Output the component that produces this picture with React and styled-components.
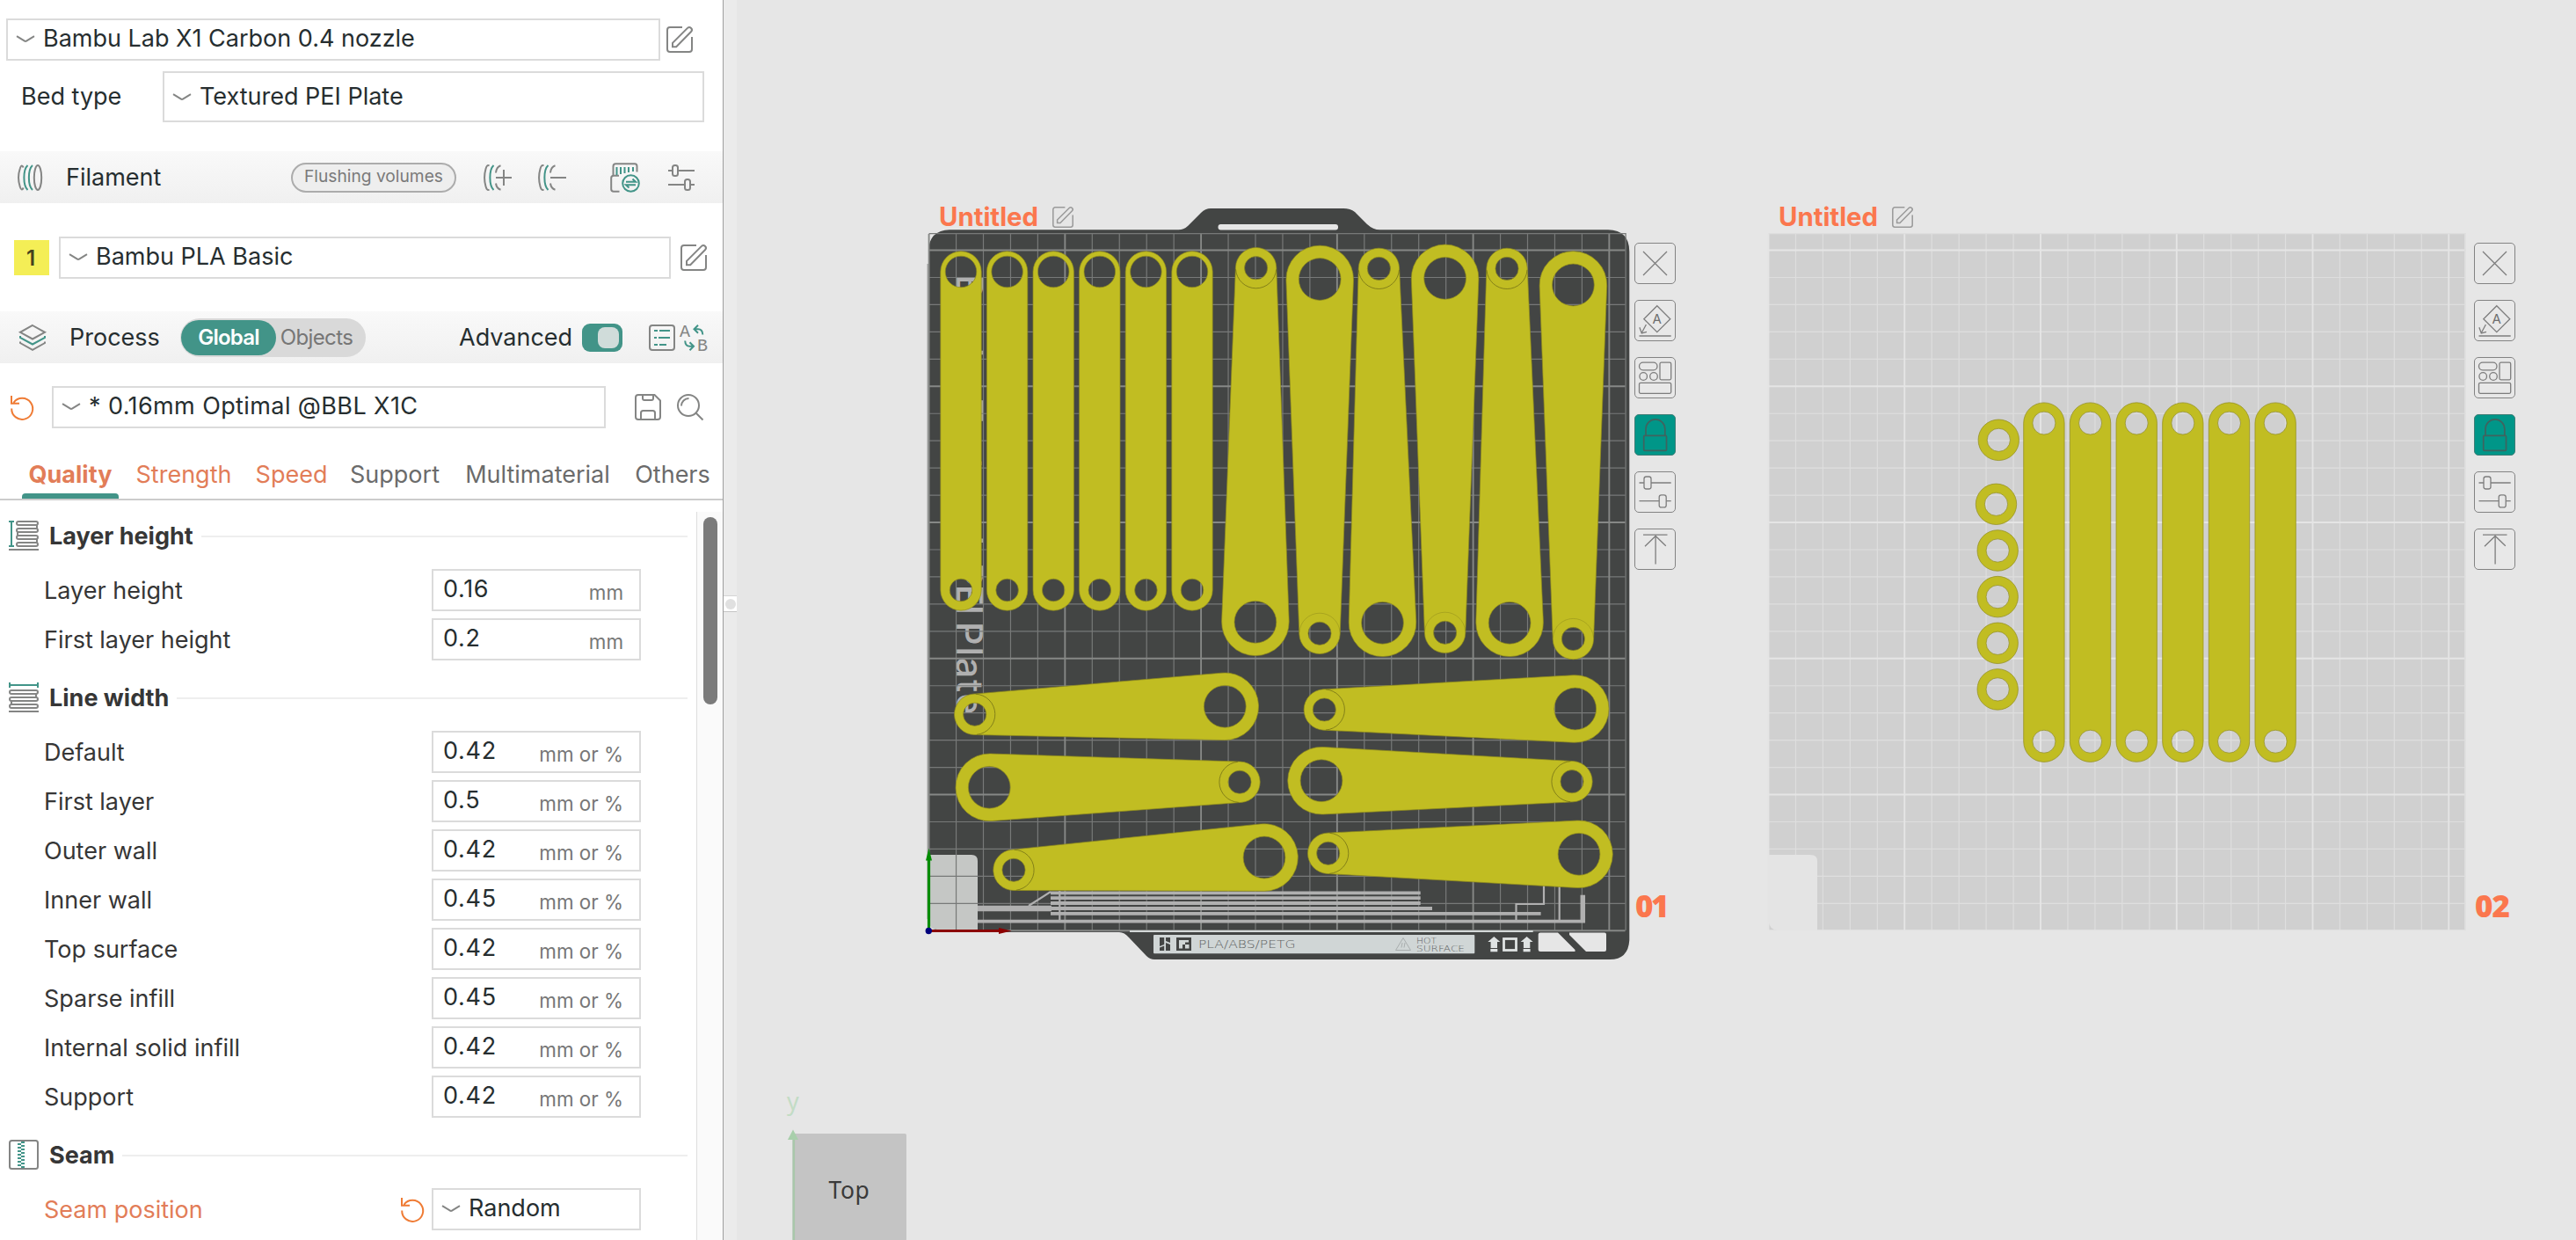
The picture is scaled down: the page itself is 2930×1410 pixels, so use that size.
import React from "react";
import styled, { createGlobalStyle } from "styled-components";

const GREEN = "#429488";
const GREY = "#848584";
const FONT = 'Inter, "Noto Sans", sans-serif';

const GlobalStyle = createGlobalStyle`
  * { box-sizing: border-box; }
  html, body { margin: 0; padding: 0; }
  body { background: #e6e6e6; font-family: ${FONT}; overflow: hidden; }
  button { font: inherit; padding: 0; }
  svg { display: block; flex: none; }
`;

/* ---------- window ---------- */

const Window = styled.div`
  display: flex;
  width: 2930px;
  height: 1410px;
  overflow: hidden;
`;

const Sidebar = styled.aside`
  display: flex;
  flex-direction: column;
  width: 823px;
  flex: none;
  background: #fff;
  border-right: 1px solid #9e9e9e;
`;

const Sash = styled.div`
  display: flex;
  align-items: flex-start;
  width: 15px;
  flex: none;
  padding-top: 677px;
  background: #ebebeb;
`;

const SashGrip = styled.div`
  display: flex;
  align-items: center;
  justify-content: center;
  width: 15px;
  height: 19px;
  background: #fff;
  border-top: 1px solid #d4d4d4;
  border-bottom: 1px solid #c4c4c4;
  &::after {
    content: "";
    width: 12px;
    height: 12px;
    border-radius: 50%;
    background: #e0e0e0;
  }
`;

const Text = styled.span`
  display: block;
  white-space: nowrap;
  font-size: ${(p) => p.$size || 27}px;
  font-weight: ${(p) => p.$weight || 400};
  line-height: 36px;
  letter-spacing: ${(p) => p.$track || 0}px;
  color: ${(p) => p.$color || "#262e30"};
`;

/* ---------- sidebar rows ---------- */

const Row = styled.div`
  display: flex;
  align-items: center;
  flex: none;
  height: ${(p) => p.$h || 48}px;
  margin-top: ${(p) => p.$top || 0}px;
  padding-left: ${(p) => p.$left || 0}px;
`;

const RowLabel = styled(Text)`
  width: 161px;
`;

const SelectBox = styled.div`
  display: flex;
  align-items: center;
  flex: none;
  gap: 9px;
  width: ${(p) => p.$w}px;
  height: ${(p) => p.$h || 48}px;
  padding: 0 10px ${(p) => (p.$h ? 0 : 2)}px 9px;
  background: #fff;
  border: 2px solid #dbdbdb;
`;

const IconSlot = styled.span`
  display: flex;
  flex: none;
  margin-left: ${(p) => p.$left || 0}px;
`;

const SectionBar = styled.header`
  display: flex;
  align-items: center;
  flex: none;
  height: 59px;
  margin-top: ${(p) => p.$top}px;
  padding: 0 ${(p) => p.$right}px 0 ${(p) => p.$left}px;
  background: linear-gradient(#f9f9f9, #f0f0f0);
`;

const SectionName = styled(Text)`
  padding-top: 1px;
  margin-left: ${(p) => p.$left}px;
  width: ${(p) => (p.$w ? `${p.$w}px` : "auto")};
`;

const FlushButton = styled.button`
  display: flex;
  align-items: center;
  justify-content: center;
  flex: none;
  width: 188px;
  height: 34px;
  padding-bottom: 3px;
  margin-left: auto;
  border: 2px solid #acacac;
  border-radius: 17px;
  background: #eee;
`;

const ColorChip = styled.div`
  display: flex;
  align-items: center;
  justify-content: center;
  flex: none;
  width: 40px;
  height: 40px;
  padding: 1px 2px 0 0;
  margin-right: 11px;
  background: #f4ee56;
`;

const Segmented = styled.div`
  display: flex;
  flex: none;
  width: 211px;
  height: 44px;
  padding: 2px 1px;
  border-radius: 22px;
  background: #d9d9d9;
`;

const Segment = styled.button`
  display: flex;
  align-items: center;
  justify-content: center;
  width: ${(p) => p.$w}px;
  height: 40px;
  border: 0;
  border-radius: 20px;
  background: ${(p) => (p.$on ? GREEN : "transparent")};
`;

const Switch = styled.div`
  display: flex;
  align-items: center;
  justify-content: flex-end;
  flex: none;
  width: 46px;
  height: 32px;
  padding-right: 4px;
  margin-left: auto;
  border-radius: 9px;
  background: ${GREEN};
  &::after {
    content: "";
    width: 24px;
    height: 24px;
    border-radius: 8px;
    background: #d0dcda;
  }
`;

const TabBar = styled.nav`
  display: flex;
  flex: none;
  height: 82px;
  padding-left: 25px;
  border-bottom: 2px solid #ccc;
`;

const Tab = styled.div`
  display: flex;
  flex-direction: column;
  align-items: center;
  justify-content: flex-end;
  flex: none;
  width: ${(p) => p.$w}px;
  &::after {
    content: "";
    width: 100%;
    height: 6px;
    margin-top: 3px;
    border-radius: 4px 4px 0 0;
    background: ${(p) => (p.$on ? GREEN : "transparent")};
  }
`;

const Scroller = styled.div`
  display: flex;
  flex: 1;
  min-height: 0;
  overflow: hidden;
`;

const Settings = styled.div`
  flex: 1;
  padding-left: 10px;
`;

const Group = styled.section`
  display: flex;
  flex-direction: column;
  gap: 8px;
  padding-top: ${(p) => p.$top}px;
`;

const GroupTitle = styled.div`
  display: flex;
  align-items: center;
  gap: 12px;
  height: 34px;
  margin-bottom: 13px;
  &::after {
    content: "";
    flex: 1;
    height: 2px;
    margin: 2px 10px 0 -3px;
    background: #eeeeee;
  }
`;

const GroupName = styled(Text)`
  padding-top: 2px;
`;

const Setting = styled.div`
  display: flex;
  align-items: center;
  height: 48px;
  padding: 0 63px 0 40px;
`;

const SettingLabel = styled(Text)`
  flex: 1;
  padding-top: 2px;
`;

const Field = styled.div`
  display: flex;
  justify-content: space-between;
  width: 238px;
  height: 48px;
  padding: 3px 18px 0 11px;
  background: #fff;
  border: 2px solid #dbdbdb;
`;

const Unit = styled(Text)`
  padding-top: 4px;
`;

const Track = styled.div`
  width: 30px;
  margin-top: 13px;
  padding: 6px 0 0 7px;
  border-left: 1px solid #dedede;
  background: #fafafa;
`;

const Thumb = styled.div`
  width: 16px;
  height: 213px;
  border-radius: 8px;
  background: #7b7b7b;
`;

/* ---------- viewport ---------- */

const Viewport = styled.main`
  position: relative;
  flex: 1;
  display: flex;
  align-items: flex-start;
  gap: 104px;
  padding: 228px 0 0 218px;
  background: #e6e6e6;
`;

const PlateBox = styled.section`
  display: flex;
  flex-direction: column;
  width: 851px;
  flex: none;
`;

const PlateTitle = styled.div`
  display: flex;
  align-items: center;
  gap: 16px;
  height: 38px;
  padding-left: 12px;
`;

const PlateBody = styled.div`
  display: flex;
  gap: 10px;
`;

const Tools = styled.div`
  display: flex;
  flex-direction: column;
  gap: 18px;
  padding-top: 10px;
`;

const Tool = styled.button`
  display: flex;
  width: 47px;
  height: 47px;
  border: 1.5px solid ${(p) => (p.$on ? "#3e7d76" : "#838383")};
  border-radius: 5px;
  background: ${(p) => (p.$on ? "#009688" : "#e8e8e8")};
  svg { margin: -1px; }
`;

const PlateNumber = styled.div`
  margin-top: auto;
  padding: 0 0 3px 1px;
  font-family: "Noto Sans", sans-serif;
  font-size: 35px;
  font-weight: 900;
  line-height: 50px;
  letter-spacing: ${(p) => p.$track}px;
  color: #fb774e;
`;

const ViewCube = styled.div`
  position: absolute;
  left: 55px;
  bottom: 0;
`;

/* ---------- icons ---------- */

const Icon = ({ w = 30, h = 30, size, sw = 2, color = GREY, children }) => (
  <svg
    width={size || w}
    height={size ? (size * h) / w : h}
    viewBox={`0 0 ${w} ${h}`}
    fill="none"
    stroke={color}
    strokeWidth={sw}
    overflow="visible"
  >
    {children}
  </svg>
);

const Chevron = () => (
  <Icon w={22} h={9} sw={2}>
    <path d="M1 1.2 10 6.6q1 .6 2 0L21 1.2" />
  </Icon>
);

const EditIcon = ({ size = 30, sw = 2, color }) => (
  <Icon size={size} sw={sw} color={color}>
    <path d="M18 1H4A3 3 0 0 0 1 4V26A3 3 0 0 0 4 29H26A3 3 0 0 0 29 26V12" />
    <path d="M7 23.2V18.8L24 1.9A2.9 2.9 0 0 1 28.1 6L11.2 23.2Z" />
  </Icon>
);

const SpoolIcon = () => (
  <Icon w={28} h={30}>
    <path d="M6.6 3.5C5.5.8 4 .6 2.8 4.5.6 11 .6 19 2.8 25.5 4 29.4 5.5 29.2 6.6 26.5" />
    <path stroke={GREEN} d="M11.5 1C6 6 6 24 11.5 29M17 1C11.500 6 11.500 24 17 29" />
    <ellipse cx="23" cy="15" rx="4.200" ry="14" />
  </Icon>
);

const SpoolEdit = ({ plus }) => (
  <Icon w={32} h={30}>
    <path d="M6.500 1.500C4.500.2 3.300 2 2.500 5 .5 12 .5 18 2.500 25c.8 3 2 4.800 4 3.500" />
    <path stroke={GREEN} d="M11.500 1C6 6 6 24 11.500 29" />
    <path d="M19.500 1.300C17 2 14.500 5 14 9.500M19.500 28.700C17 28 14.500 25 14 21.500" />
    <path d={plus ? "M14 15H32M23 6V24" : "M14 15H32"} />
  </Icon>
);

const CardIcon = () => (
  <Icon w={34} h={34}>
    <path d="M3.500 15V4Q3.500 1.200 6.300 1.200H28Q30.500 1.200 30.500 4V10.500" />
    <path d="M10 14.800H4Q1.200 14.800 1.200 17.500V30Q1.200 32.800 4 32.800H10.500" />
    <path stroke={GREEN} d="M7.500 5V14M12 5V13M16.500 5V12M21 5V11M26 5V10" />
    <circle stroke={GREEN} cx="23.500" cy="23.500" r="9.300" />
    <path stroke={GREEN} d="M18 21.700H29L25.500 18.500M29 25.300H18L21.500 28.500" />
  </Icon>
);

const SlidersIcon = () => (
  <Icon>
    <path d="M0 7H5M11 7H30M0 23H19M25 23H30" />
    <rect x="5" y="1" width="6" height="12" rx="2.500" />
    <rect x="19" y="17" width="6" height="12" rx="2.500" />
  </Icon>
);

const LayersIcon = () => (
  <Icon>
    <path d="M15 1 29 8.800 15 16.500 1 8.800Z" />
    <path stroke={GREEN} d="M1 13V15L15 22.500 29 15V13" />
    <path d="M1 19.500V21L15 28.800 29 21V19.500" />
  </Icon>
);

const ListIcon = () => (
  <Icon>
    <rect x="1" y="1" width="28" height="28" rx="3" />
    <path stroke={GREEN} d="M6 7H10M12 7H24M6 15H9M11 15H24M6 23H10M12 23H20" />
  </Icon>
);

const CompareIcon = () => (
  <Icon>
    <g fill={GREY} stroke="none" fontFamily='"Liberation Mono", monospace' fontSize="20">
      <text x="-1" y="14">A</text>
      <text x="19" y="29.500">B</text>
    </g>
    <path stroke={GREEN} d="M20 .8 15.500 5.300 20 9.800M15.500 5.300H20Q25 5.300 25.300 11.500" />
    <path stroke={GREEN} d="M10.500 29.200 15 24.700 10.500 20.200M15 24.700H10.500Q5.500 24.700 5.200 18.500" />
  </Icon>
);

const UndoIcon = () => (
  <Icon w={26} h={26} color="#ef7b34">
    <path d="M1 0V8.700H10M3.500 7.800A12 12 0 1 1 1.200 14.500" />
  </Icon>
);

const SaveIcon = () => (
  <Icon>
    <path d="M4 1H22.500L29 7.500V26A3 3 0 0 1 26 29H4A3 3 0 0 1 1 26V4A3 3 0 0 1 4 1Z" />
    <path d="M9 1V5Q9 7 11 7H19Q21 7 21 5V1M7 29V21.500Q7 19 9.500 19H20.500Q23 19 23 21.500V29" />
  </Icon>
);

const SearchIcon = () => (
  <Icon>
    <circle cx="13" cy="13" r="12" />
    <path d="M21.700 21.700 29.500 29.500M5 13.500A8.500 8.500 0 0 1 13.500 5" />
  </Icon>
);

const LayerHeightIcon = () => (
  <Icon w={34} h={34}>
    <path stroke={GREEN} d="M3 1V29M0 1H6M0 29H6" />
    {[1, 9, 17, 25].map((y) => (
      <rect key={y} x="9" y={y} width="24" height="4" rx="2" />
    ))}
    <path d="M0 33H34M32 5V9M10 13V17M32 21V25" />
  </Icon>
);

const LineWidthIcon = () => (
  <Icon w={34} h={34}>
    <path stroke={GREEN} d="M1 3H33M1 0V6M33 0V6" />
    {[9, 17, 25].map((y) => (
      <rect key={y} x="1" y={y} width="32" height="4" rx="2" />
    ))}
    <path d="M0 33H34M31 13V17M3 21V25" />
  </Icon>
);

const SeamIcon = () => (
  <Icon w={34} h={34}>
    <rect x="1" y="1" width="32" height="32" rx="2.500" />
    <g stroke={GREEN} strokeWidth="4" strokeDasharray="2 2">
      <path d="M16 2V32" />
      <path d="M12 4V32" />
    </g>
  </Icon>
);

const TOOL_ICONS = [
  <path d="M10 10 37 37M37 10 10 37" />,
  <>
    <path d="M25.800 6.700 40.800 21.700 25.800 36.700 10.800 21.700ZM5.500 41H41.700M13.400 28 8.300 37.500M5.900 31.300 8.300 37.900 14 36.300" />
    <text x="25.800" y="26.800" textAnchor="middle" fontSize="15" fill="#6e6e6e" stroke="none">
      A
    </text>
  </>,
  <>
    <rect x="5.500" y="6.200" width="20.500" height="8.600" rx="4.300" />
    <rect x="29" y="6.200" width="12.700" height="19.600" rx="1.500" />
    <circle cx="10.200" cy="22" r="4.300" />
    <circle cx="22" cy="22" r="4.300" />
    <rect x="5.500" y="29.300" width="36.200" height="12" rx="1.500" />
  </>,
  <>
    <path d="M13 24.400V16.800A10.900 10.900 0 0 1 34.800 16.800V24.400" />
    <rect x="10.700" y="24.400" width="25.800" height="16.900" rx="1" />
  </>,
  <>
    <path d="M5.500 13H11M19 13H41.700M5.500 33.700H28.200M36.200 33.700H41.700" />
    <rect x="11" y="6" width="8" height="14" rx="2.500" />
    <rect x="28.200" y="26.900" width="8" height="14" rx="2.500" />
  </>,
  <path d="M10 7.200H37.500M24.100 8V40.600M12 20.300 24.100 8.500 35.800 19.800" />,
];

/* ---------- plate drawing ---------- */

const YELLOW = "#c1bd22";
const EDGE = "#8f8b1c";
const PITCH = 30.95;

const disc = (x, y, r) => `M${x - r} ${y}a${r} ${r} 0 1 0 ${2 * r} 0a${r} ${r} 0 1 0 ${-2 * r} 0Z`;

/* Outline of the belt round two discs, with a hole in each. */
function armPath(x1, y1, r1, h1, x2, y2, r2, h2) {
  const a = Math.atan2(y2 - y1, x2 - x1);
  const t = Math.acos((r1 - r2) / Math.hypot(x2 - x1, y2 - y1));
  const p = (x, y, r, k) => `${x + r * Math.cos(a + k * t)} ${y + r * Math.sin(a + k * t)}`;
  return (
    `M${p(x1, y1, r1, 1)}A${r1} ${r1} 0 ${r1 >= r2 ? 1 : 0} 1 ${p(x1, y1, r1, -1)}` +
    `L${p(x2, y2, r2, -1)}A${r2} ${r2} 0 ${r2 > r1 ? 1 : 0} 1 ${p(x2, y2, r2, 1)}Z` +
    disc(x1, y1, h1) +
    disc(x2, y2, h2)
  );
}

const Part = ({ d }) => <path d={d} fill={YELLOW} fillRule="evenodd" stroke={EDGE} strokeWidth="0.7" />;

/* A crank: big eye at b, small eye with a raised boss at s. */
const Crank = ({ b, s, faint }) => {
  const a = Math.atan2(b[1] - s[1], b[0] - s[0]);
  const r = 23.1;
  const pt = (k) => `${s[0] + r * Math.cos(a + k)} ${s[1] + r * Math.sin(a + k)}`;
  return (
    <g>
      <Part d={armPath(b[0], b[1], 38.3, 23.9, s[0], s[1], 23.2, 13.1)} />
      <path d={`M${pt(-1.5)}A${r} ${r} 0 0 1 ${pt(1.5)}`} fill="none" stroke="#6f6c16" strokeWidth="1" opacity={faint ? 0.3 : 0.75} />
    </g>
  );
};

const CRANKS = [
  { s: [1428.6, 304.7], b: [1427.9, 707.3] },
  { b: [1501.2, 317.5], s: [1501, 720.3], faint: true },
  { s: [1568.4, 305.4], b: [1572.5, 708.3] },
  { b: [1643.6, 316.4], s: [1643.6, 719.3], faint: true },
  { s: [1714, 305.4], b: [1717.1, 708.3] },
  { b: [1789.4, 324], s: [1789.4, 726.5], faint: true },
  { s: [1108.7, 812.3], b: [1393.3, 803.3] },
  { b: [1125.3, 895.3], s: [1410, 889.3] },
  { s: [1153, 989.3], b: [1438, 975] },
  { s: [1506.3, 807], b: [1791.7, 806] },
  { b: [1503, 887.7], s: [1788, 888.7] },
  { s: [1510.7, 970.3], b: [1796, 971.3] },
];

function Grid({ x, thin, bold }) {
  const lines = Array.from({ length: 26 }, (_, i) => i);
  const d = (keep) =>
    lines
      .filter(keep)
      .map((i) => `M${x + i * PITCH} 266V1058M${x} ${1058.3 - i * PITCH}H${x + 792}`)
      .join("");
  return (
    <g fill="none">
      <path d={d((i) => i % 5)} stroke={thin} strokeWidth="1.2" />
      <path d={d((i) => i % 5 === 0)} stroke={bold} strokeWidth="1.9" />
      <path d={`M${x} 265.700H${x + 792.5}V1058`} stroke={thin} strokeWidth="1.3" />
    </g>
  );
}

const Scene = ({ x, children }) => (
  <svg width="793" height="792" viewBox={`${x} 266 793 792`} overflow="visible">
    {children}
  </svg>
);

function TexturedPlate() {
  const silver = "#b0b0b0";
  return (
    <Scene x={1056}>
      <path d="M1055.500 300V1045" stroke="#a2a3a2" strokeWidth="2" />
      <path
        fill="#434544"
        d="M1056 285Q1057 262 1080 261.300H1340Q1346 261.500 1351 257L1366 242Q1371 237 1377 237H1528Q1536 237 1541 241L1555 255Q1562 261.500 1570 261.300H1829Q1853.300 262 1853.300 286V1069Q1852 1091 1831 1091H1313Q1308 1091 1304 1087L1284 1066Q1279 1060 1273 1060H1075Q1056 1059 1056 1040Z"
      />
      <rect x="1385.500" y="255" width="136.500" height="6.500" rx="3" fill="#e6e6e6" />
      <g fill={silver} fontSize="41.500" fontWeight="500">
        <text transform="translate(1088 312) rotate(90)" textLength="308">Bambu Textured</text>
        <text transform="translate(1088 640) rotate(90)" textLength="59">PEI</text>
        <text transform="translate(1088 707) rotate(90)" textLength="106">Plate</text>
      </g>
      <path fill="#c5c7c5" d="M1057 972H1105Q1112 972 1112 979V1057H1066Q1057 1057 1057 1048Z" />
      <Grid x={1056.6} thin="#777978" bold="#868886" />
      <g fill="none" stroke={silver} strokeWidth="3.800">
        <path d="M1195 1015.300H1615.700M1195 1021.200H1615.700M1195 1027H1615.700M1195 1033H1629M1195 1038.800H1752.600M1112 1047.700H1803" />
        <path strokeWidth="6.500" d="M1112 1033H1196" />
        <path strokeWidth="2.200" d="M1205.300 1013V1047M1170 1030 1195 1014M1756 1006V1028H1724.500V1047M1773.700 1007V1047" />
        <path strokeWidth="5.500" d="M1800.300 1017.700V1049" />
      </g>
      <path d="M1285 1059H1743.700" stroke="#d3d8d8" strokeWidth="2" />
      <rect x="1312" y="1063" width="365.300" height="21.300" rx="1" fill="#d0d6d6" />
      <g fill="#434544">
        <path d="M1319 1066H1324.200V1074L1319 1076ZM1319 1077.500 1324.200 1075.500V1081H1319ZM1326 1066H1331V1072L1326 1070ZM1326 1072 1331 1074V1081H1326Z" />
        <path fillRule="evenodd" d="M1338 1066H1355V1081H1338ZM1341 1069V1078.500H1345V1074H1348V1071.500H1352V1069ZM1348 1074V1078.500H1352.500V1074Z" />
      </g>
      <g fill="#5d6161" fontFamily='"DejaVu Sans", sans-serif' fontWeight="200">
        <text x="1363" y="1078" fontSize="12.500" textLength="110.500" lengthAdjust="spacingAndGlyphs">PLA/ABS/PETG</text>
        <text x="1611" y="1073.300" fontSize="9" textLength="23" lengthAdjust="spacingAndGlyphs">HOT</text>
        <text x="1611" y="1081.500" fontSize="9" textLength="55" lengthAdjust="spacingAndGlyphs">SURFACE</text>
      </g>
      <path fill="none" stroke="#a9aeae" d="M1596 1066.500 1604.500 1080.500H1587.500ZM1594 1077.500 1595 1072M1597 1077.500 1598 1072" />
      <g fill="#dfe3e3">
        {[1692.3, 1729.6].map((x) => (
          <path key={x} d={`M${x + 7} 1065l7 6h-3.300v7h-7.400v-7H${x}ZM${x + 3} 1079h8v3.200h-8Z`} />
        ))}
      </g>
      <rect x="1710.500" y="1067.500" width="14" height="13" fill="none" stroke="#dfe3e3" strokeWidth="2.800" />
      <path fill="#e6e6e6" d="M1752 1060.500H1772L1791.500 1080V1082H1752Q1749.700 1082 1749.700 1080V1062.500Q1749.700 1060.500 1752 1060.500ZM1785 1060.500H1825Q1827 1060.500 1827 1062.500V1080Q1827 1082 1825 1082H1804L1785 1063Z" />
      {[0, 1, 2, 3, 4, 5].map((i) => (
        <Part key={i} d={armPath(1093 + i * 52.6, 309, 23.2, 17.8, 1093 + i * 52.6, 671, 23.2, 12.8)} />
      ))}
      {CRANKS.map((c, i) => (
        <Crank key={i} {...c} />
      ))}
      <path d="M1056.500 1058V976" stroke="#008c00" strokeWidth="3.200" />
      <path d="M1053 978.500 1056.500 964.500 1060 978.500Z" fill="#008c00" />
      <path d="M1057 1058.500H1138" stroke="#8c0000" strokeWidth="3.200" />
      <path d="M1136 1055 1150.500 1058.500 1136 1062Z" fill="#8c0000" />
      <circle cx="1056.300" cy="1058.500" r="3.700" fill="#00007c" />
    </Scene>
  );
}

function BlankPlate() {
  const rings = [[2273.3, 500.3], [2270.5, 573.3], [2272.2, 626], [2272.2, 678.6], [2272.2, 731.3], [2272.2, 783.9]];
  return (
    <Scene x={2011}>
      <rect x="2011.500" y="266" width="792" height="792" fill="#d0d0d0" />
      <Grid x={2011.5} thin="#dedede" bold="#e5e5e5" />
      <path fill="#e4e4e4" d="M2011.500 972H2059Q2067 972 2067 979V1058H2022Q2012 1057 2011.500 1046Z" />
      {[0, 1, 2, 3, 4, 5].map((i) => (
        <Part key={i} d={armPath(2324.9 + i * 52.65, 481.1, 23.2, 13, 2324.9 + i * 52.65, 843.2, 23.2, 13)} />
      ))}
      {rings.map(([x, y]) => (
        <Part key={y} d={disc(x, y, 23.2) + disc(x, y, 13.1)} />
      ))}
    </Scene>
  );
}

const Plate = ({ number, track, children }) => (
  <PlateBox>
    <PlateTitle>
      <Text $size={29.3} $weight={700} $color="#fb774e">Untitled</Text>
      <EditIcon size={24} sw={1.9} color="#9a9a9a" />
    </PlateTitle>
    <PlateBody>
      {children}
      <Tools>
        {TOOL_ICONS.map((icon, i) => (
          <Tool key={i} $on={i === 3}>
            <Icon w={47} h={47} sw={i === 3 ? 1.7 : 1.3} color={i === 3 ? "#40635f" : "#7d7d7d"}>{icon}</Icon>
          </Tool>
        ))}
        <PlateNumber $track={track}>{number}</PlateNumber>
      </Tools>
    </PlateBody>
  </PlateBox>
);

/* ---------- data ---------- */

const ORANGE = "#e27d58";
const MUTED = "#6b6b6b";
const LABEL = "#363636";

const TABS = [
  ["Quality", 110, ORANGE, true],
  ["Strength", 148, ORANGE],
  ["Speed", 97, ORANGE],
  ["Support", 138, MUTED],
  ["Multimaterial", 187, MUTED],
  ["Others", 120, MUTED],
];

const GROUPS = [
  ["Layer height", <LayerHeightIcon />, "mm", [["Layer height", "0.16"], ["First layer height", "0.2"]]],
  [
    "Line width",
    <LineWidthIcon />,
    "mm or %",
    [
      ["Default", "0.42"],
      ["First layer", "0.5"],
      ["Outer wall", "0.42"],
      ["Inner wall", "0.45"],
      ["Top surface", "0.42"],
      ["Sparse infill", "0.45"],
      ["Internal solid infill", "0.42"],
      ["Support", "0.42"],
    ],
  ],
];

export default function App() {
  return (
    <Window>
      <GlobalStyle />
      <Sidebar>
        <Row $top={21} $left={7}>
          <SelectBox $w={744}>
            <Chevron />
            <Text>Bambu Lab X1 Carbon 0.4 nozzle</Text>
          </SelectBox>
          <IconSlot $left={7}><EditIcon /></IconSlot>
        </Row>
        <Row $top={12} $left={24} $h={58}>
          <RowLabel>Bed type</RowLabel>
          <SelectBox $w={616} $h={58}>
            <Chevron />
            <Text>Textured PEI Plate</Text>
          </SelectBox>
        </Row>

        <SectionBar $top={33} $left={20} $right={32}>
          <SpoolIcon />
          <SectionName $left={27}>Filament</SectionName>
          <FlushButton><Text $size={19.2} $color="#7a7a7a">Flushing volumes</Text></FlushButton>
          <IconSlot $left={31}><SpoolEdit plus /></IconSlot>
          <IconSlot $left={30}><SpoolEdit /></IconSlot>
          <IconSlot $left={50}><CardIcon /></IconSlot>
          <IconSlot $left={32}><SlidersIcon /></IconSlot>
        </SectionBar>
        <Row $top={38} $left={16}>
          <ColorChip><Text $size={24} $weight={600} $color="#45431e">1</Text></ColorChip>
          <SelectBox $w={696}>
            <Chevron />
            <Text>Bambu PLA Basic</Text>
          </SelectBox>
          <IconSlot $left={11}><EditIcon /></IconSlot>
        </Row>

        <SectionBar $top={37} $left={22} $right={18}>
          <LayersIcon />
          <SectionName $left={27} $w={126}>Process</SectionName>
          <Segmented>
            <Segment $w={108} $on><Text $size={24} $weight={600} $color="#fff" $track={-0.8}>Global</Text></Segment>
            <Segment $w={92}><Text $size={24} $color="#767676" $track={-0.6}>Objects</Text></Segment>
          </Segmented>
          <SectionName $left={106}>Advanced</SectionName>
          <Switch />
          <IconSlot $left={30}><ListIcon /></IconSlot>
          <IconSlot $left={6}><CompareIcon /></IconSlot>
        </SectionBar>
        <Row $top={26} $left={12}>
          <UndoIcon />
          <IconSlot $left={21}>
            <SelectBox $w={630}>
              <Chevron />
              <Text $track={0.4}>* 0.16mm Optimal @BBL X1C</Text>
            </SelectBox>
          </IconSlot>
          <IconSlot $left={33}><SaveIcon /></IconSlot>
          <IconSlot $left={18}><SearchIcon /></IconSlot>
        </Row>

        <TabBar>
          {TABS.map(([name, w, color, on]) => (
            <Tab key={name} $w={w} $on={on}>
              <Text $color={color} $weight={on ? 700 : 400}>{name}</Text>
            </Tab>
          ))}
        </TabBar>

        <Scroller>
          <Settings>
            {GROUPS.map(([title, icon, unit, rows], g) => (
              <Group key={title} $top={g ? 25 : 23}>
                <GroupTitle>
                  {icon}
                  <GroupName $weight={700} $color={LABEL}>{title}</GroupName>
                </GroupTitle>
                {rows.map(([label, value]) => (
                  <Setting key={label}>
                    <SettingLabel $color={LABEL}>{label}</SettingLabel>
                    <Field>
                      <Text $track={0.7}>{value}</Text>
                      <Unit $size={22.4} $color="#777">{unit}</Unit>
                    </Field>
                  </Setting>
                ))}
              </Group>
            ))}
            <Group $top={25}>
              <GroupTitle>
                <SeamIcon />
                <GroupName $weight={700} $color={LABEL}>Seam</GroupName>
              </GroupTitle>
              <Setting>
                <SettingLabel $color={ORANGE}>Seam position</SettingLabel>
                <UndoIcon />
                <IconSlot $left={9}>
                  <SelectBox $w={238}>
                    <Chevron />
                    <Text>Random</Text>
                  </SelectBox>
                </IconSlot>
              </Setting>
            </Group>
          </Settings>
          <Track><Thumb /></Track>
        </Scroller>
      </Sidebar>

      <Sash><SashGrip /></Sash>

      <Viewport>
        <Plate number="01" track={-2.5}><TexturedPlate /></Plate>
        <Plate number="02" track={-1}><BlankPlate /></Plate>
        <ViewCube>
          <svg width="150" height="190" viewBox="893 1220 150 190" fontFamily='"Noto Sans", sans-serif'>
            <text x="895" y="1262" fontSize="27" fill="#c3dcc5">y</text>
            <rect x="901.500" y="1289" width="129.500" height="122" rx="2" fill="#c4c4c4" />
            <path d="M902.800 1294V1410" stroke="#a8c7aa" strokeWidth="2.600" />
            <path d="M896 1296 902 1284.500 908 1296Z" fill="#a8cfab" />
            <text x="942.500" y="1363" fontSize="26.500" fill="#3a3a3a" letterSpacing="0.500">Top</text>
          </svg>
        </ViewCube>
      </Viewport>
    </Window>
  );
}
